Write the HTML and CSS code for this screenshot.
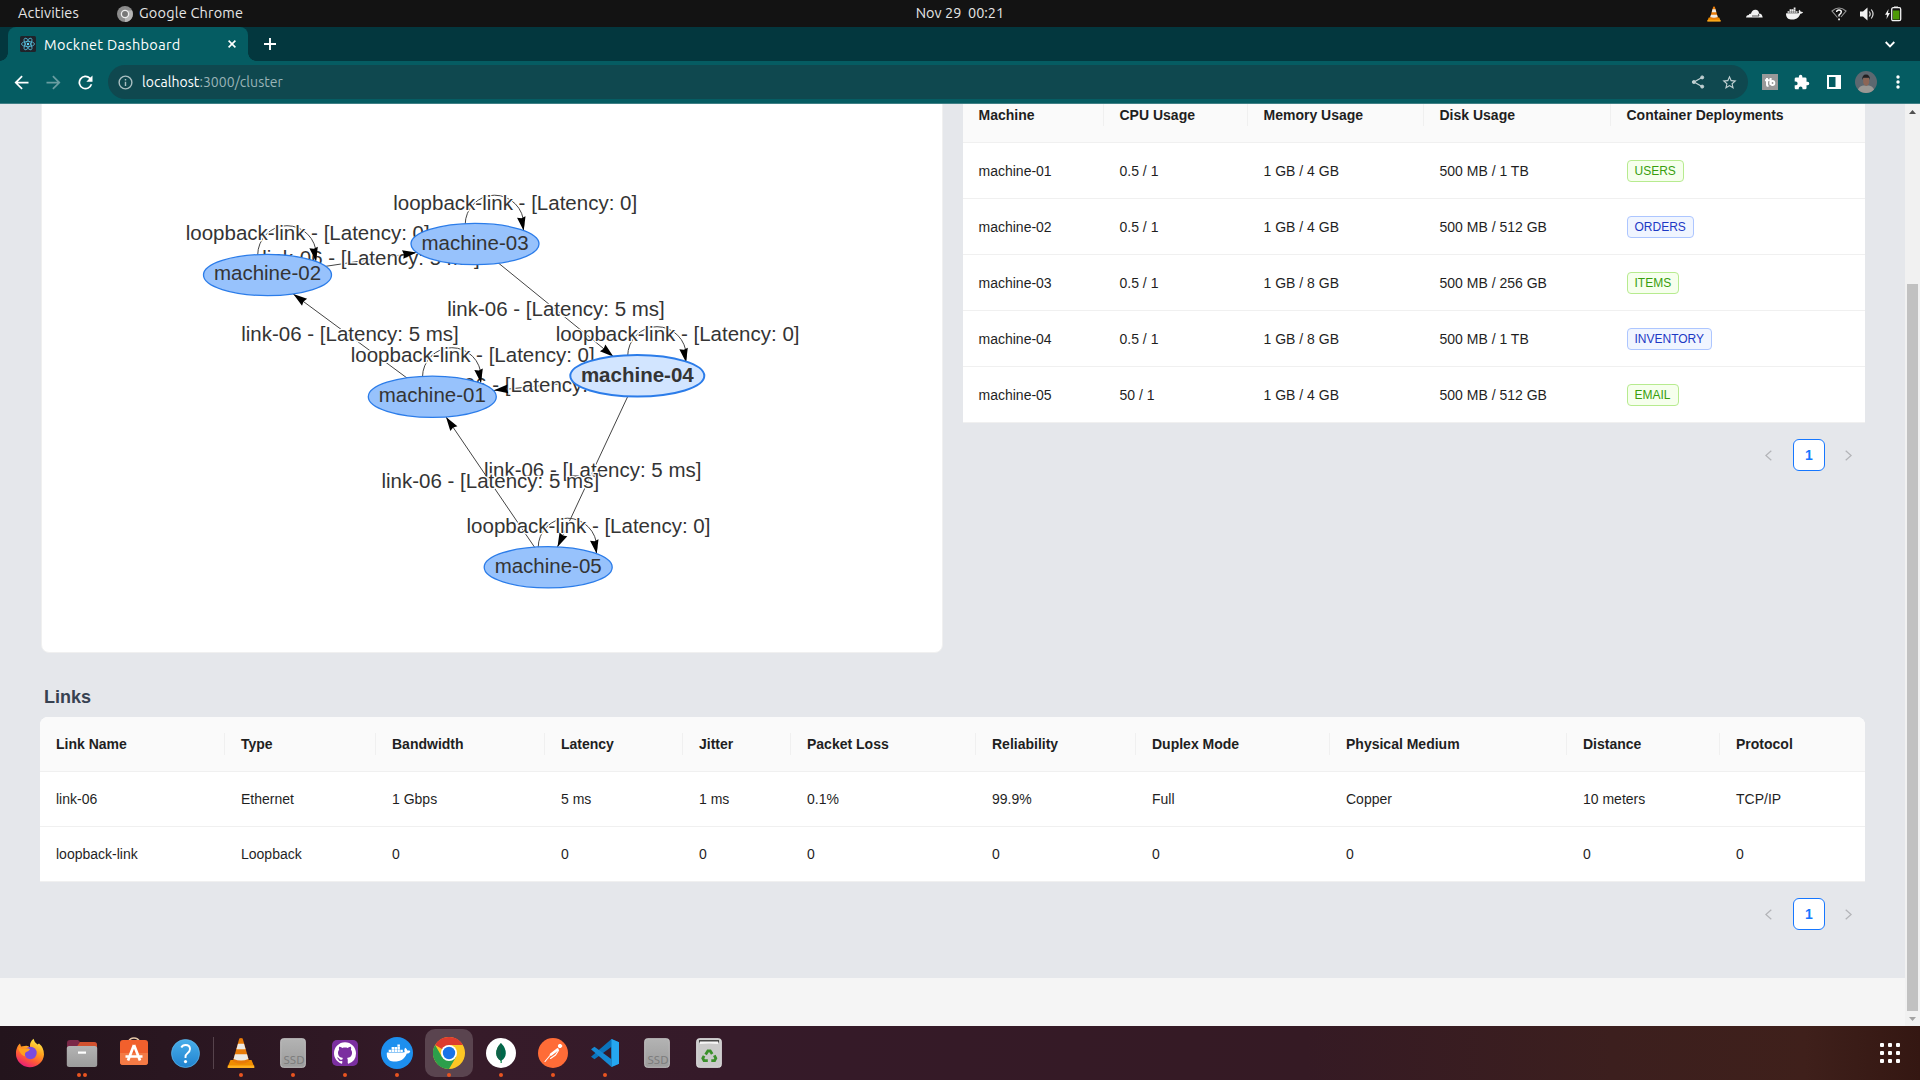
FILE: index.html
```html
<!DOCTYPE html>
<html lang="en">
<head>
<meta charset="utf-8">
<title>Mocknet Dashboard</title>
<link rel="stylesheet" href="styles.css">
</head>
<body>
<svg class="defs" width="0" height="0" aria-hidden="true">
  <defs>
    <symbol id="whale" viewBox="0 0 24 24">
      <path d="M23.76 9.89c-.06-.05-.67-.51-1.95-.51-.34 0-.68.03-1.01.09-.25-1.7-1.65-2.53-1.72-2.57l-.34-.2-.23.33c-.28.44-.49.92-.61 1.43-.23.97-.09 1.88.4 2.66-.59.33-1.55.41-1.74.42H.75a.75.75 0 0 0-.75.75 11.4 11.4 0 0 0 .69 4.06c.55 1.43 1.36 2.48 2.41 3.12 1.18.73 3.1 1.14 5.28 1.14.98 0 1.96-.09 2.93-.27a12.2 12.2 0 0 0 3.82-1.39c.98-.56 1.86-1.28 2.61-2.13 1.25-1.42 2-3 2.55-4.4h.22c1.37 0 2.22-.55 2.68-1.01.31-.29.55-.65.71-1.05z"/>
      <path d="M2.200 8.800h2.500v2.300H2.200zM5.100 8.800h2.500v2.300H5.100zM8 8.800h2.500v2.300H8zM10.900 8.800h2.500v2.300h-2.500zM13.800 8.800h2.500v2.300h-2.500zM5.100 6.100h2.500v2.300H5.100zM8 6.100h2.500v2.300H8zM10.900 6.100h2.500v2.300h-2.500zM10.900 3.400h2.500v2.300h-2.500z"/>
    </symbol>
    <symbol id="cone" viewBox="0 0 28 32">
      <path fill="#f08c00" d="M3.500 23h21L27.600 30.500H.4z"/>
      <path fill="#ffb020" d="M.8 28.500h26.400v2.500H.8z"/>
      <path fill="#e87b08" d="M12.300 1.500q1.700-1 3.400 0l6.500 23q-8.200 4.600-16.400 0z"/>
      <path fill="#eceae6" d="M11 6.700h6l1.600 5.600H9.400zM8 17.300h12l1.400 4.600q-7.400 3-14.800 0z"/>
    </symbol>
    <symbol id="ssd" viewBox="0 0 26 30">
      <rect x=".7" y=".7" width="24.600" height="28.600" rx="2.600" fill="url(#metal)" stroke="#c3c3c3"/>
      <text x="3.500" y="26" class="ssd-text">SSD</text>
    </symbol>
    <linearGradient id="metal" x2="0" y2="1"><stop stop-color="#b3b3b3"/><stop offset="1" stop-color="#9c9c9c"/></linearGradient>
    <linearGradient id="fox" x1=".8" y1="0" x2=".3" y2="1"><stop stop-color="#fff44f"/><stop offset=".4" stop-color="#ffa21e"/><stop offset=".7" stop-color="#ff5a36"/><stop offset="1" stop-color="#e5197c"/></linearGradient>
    <linearGradient id="help" x2="0" y2="1"><stop stop-color="#48aeea"/><stop offset="1" stop-color="#2183cf"/></linearGradient>
    <path id="arrow" d="M0 0L-14 4.300L-12.700 0L-14-4.300z"/>
  </defs>
</svg>

<div class="desktop">
  <header class="topbar">
    <span class="activities">Activities</span>
    <span class="app-name">
      <svg width="16" height="16" viewBox="0 0 16 16"><circle cx="8" cy="8" r="8" fill="#8c8c8c"/><path d="M8 16a8 8 0 0 0 7-11.500H8z" fill="#b5b5b5"/><circle cx="8" cy="8" r="3.600" fill="#777" stroke="#eee" stroke-width="1.300"/></svg>
      <span>Google Chrome</span>
    </span>
    <span class="clock">Nov 29&nbsp; 00:21</span>
    <div class="tray">
      <span class="tray-wide"><svg width="14" height="16"><use href="#cone"/></svg></span>
      <span class="tray-wide"><svg width="17" height="9" viewBox="0 0 17 9" fill="#f2f2f2"><path d="M0 8.500C.2 6.800 1.400 6 2.800 6 3 4.700 4.300 4.400 5 4.800 5.700 1.800 7.700.4 10 .8c2 .3 3 2 3 3.600 2.200.1 3.400 1.500 3.700 4.100z"/><path d="M6 7h7l-.6-2.200" fill="none" stroke="#131313" stroke-width=".7"/></svg></span>
      <span class="tray-wide"><svg width="17" height="17" fill="#f2f2f2"><use href="#whale"/></svg></span>
      <span class="tray-wifi"><svg width="16" height="14" viewBox="0 0 16 14" fill="none" stroke="#bdbdbd"><path d="M6.500 10.500L1 4Q8-2 15 4l-5 6" stroke-width="1.100" opacity=".75"/><path d="M5.600 5Q5.800 3 8 3q2.300 0 2.300 2Q10.300 6.400 8 8v1.500" stroke="#fff" stroke-width="1.400"/><path d="M7.200 11.500h1.700v1.700H7.200z" fill="#fff" stroke="none"/></svg></span>
      <span class="tray-sound"><svg width="15" height="14" viewBox="0 0 15 14"><path d="M0 4.500h3L7.500.5v13L3 9.500H0z" fill="#f2f2f2"/><path d="M9.200 4.500q2 2.500 0 5M11.300 2.500q3.500 4.500 0 9" fill="none" stroke="#ddd" stroke-width="1.200"/></svg></span>
      <span class="tray-battery"><svg width="17" height="16" viewBox="0 0 17 16"><path d="M3.600 3L0 8.800h2L1.500 13 5 7H3z" fill="#f2f2f2"/><path d="M9 .5h4v2H9z" fill="#f2f2f2"/><rect x="6.700" y="1.700" width="9" height="13" rx="1.500" fill="#131313" stroke="#f2f2f2" stroke-width="1.300"/><path d="M8 4.500h6.400v9H8z" fill="#4e9a06"/></svg></span>
    </div>
  </header>

  <div class="tabstrip">
    <div class="tab">
      <svg width="16" height="16" viewBox="0 0 16 16"><rect width="16" height="16" rx="1.500" fill="#20232a"/><g fill="none" stroke="#61dafb" stroke-width=".8" opacity=".85"><ellipse cx="8" cy="8" rx="6.500" ry="2.600"/><ellipse cx="8" cy="8" rx="6.500" ry="2.600" transform="rotate(60 8 8)"/><ellipse cx="8" cy="8" rx="6.500" ry="2.600" transform="rotate(120 8 8)"/></g><circle cx="8" cy="8" r="1.200" fill="#61dafb"/></svg>
      <span class="tab-title">Mocknet Dashboard</span>
      <svg width="8" height="8" viewBox="0 0 8 8" stroke="#fff" stroke-width="1.600"><path d="M.6.6l6.800 6.800M7.400.6L.6 7.400"/></svg>
    </div>
    <svg class="new-tab" width="12" height="12" viewBox="0 0 12 12" stroke="#fff" stroke-width="1.900"><path d="M6 0v12M0 6h12"/></svg>
    <svg class="tab-search" width="10" height="7" viewBox="0 0 10 7" fill="none" stroke="#fff" stroke-width="1.800"><path d="M.7 1L5 5.400 9.300 1"/></svg>
  </div>

  <div class="toolbar">
    <span class="tool"><svg width="21" height="21" viewBox="0 0 24 24" fill="#fff"><path d="M20 11H7.800l5.600-5.600L12 4l-8 8 8 8 1.400-1.400L7.800 13H20z"/></svg></span>
    <span class="tool"><svg width="21" height="21" viewBox="0 0 24 24" fill="#6a9da1"><path d="M12 4l-1.400 1.400 5.600 5.600H4v2h12.200l-5.600 5.600L12 20l8-8z"/></svg></span>
    <span class="tool"><svg width="21" height="21" viewBox="0 0 24 24" fill="#fff"><path d="M17.650 6.350A8 8 0 1 0 19.730 14h-2.080A6 6 0 1 1 16.220 7.780L13 11h7V4z"/></svg></span>
    <div class="omnibox">
      <svg width="17" height="17" viewBox="0 0 24 24" fill="#a9bec1"><path d="M11 7h2v2h-2zm0 4h2v6h-2zm1-9a10 10 0 1 0 0 20 10 10 0 0 0 0-20zm0 18a8 8 0 1 1 0-16 8 8 0 0 1 0 16z"/></svg>
      <span class="url">localhost<span class="url-rest">:3000/cluster</span></span>
      <svg class="share" width="14" height="14" viewBox="0 0 14 14" fill="#c1d0d2" stroke="#c1d0d2"><path d="M11 2.500L3 7l8 4.500" fill="none" stroke-width="1.300"/><circle cx="11.200" cy="2.400" r="1.500"/><circle cx="2.800" cy="7" r="1.500"/><circle cx="11.200" cy="11.600" r="1.500"/></svg>
      <svg class="star" width="17" height="17" viewBox="0 0 24 24" fill="#c1d0d2"><path d="M22 9.240l-7.190-.62L12 2 9.190 8.630 2 9.240l5.460 4.730L5.820 21 12 17.270 18.180 21l-1.630-7.030L22 9.240zM12 15.400l-3.760 2.270 1-4.280-3.320-2.880 4.380-.38L12 6.100l1.710 4.040 4.380.38-3.320 2.880 1 4.280L12 15.400z"/></svg>
    </div>
    <span class="tool"><svg width="16" height="16" viewBox="0 0 16 16"><rect width="16" height="16" fill="#999"/><path d="M5 4v6.500q0 1.500 1.500 1.500M3 6.200h4.500M8.600 4v7" fill="none" stroke="#fff" stroke-width="2"/><circle cx="10.400" cy="9" r="2" fill="none" stroke="#fff" stroke-width="1.800"/></svg></span>
    <span class="tool"><svg width="16" height="16" viewBox="1 0 23 23" fill="#fff"><path d="M20.500 11H19V7a2 2 0 0 0-2-2h-4V3.500a2.500 2.500 0 0 0-5 0V5H4a2 2 0 0 0-2 2v3.800h1.500a2.700 2.700 0 0 1 0 5.400H2V20c0 1.100.9 2 2 2h3.800v-1.500a2.700 2.700 0 0 1 5.400 0V22H17a2 2 0 0 0 2-2v-4h1.500a2.500 2.500 0 0 0 0-5z"/></svg></span>
    <span class="tool"><svg width="14" height="14" viewBox="0 0 14 14"><path fill="#fff" fill-rule="evenodd" d="M0 0h14v14H0zM2 2v10h6.500V2z"/></svg></span>
    <span class="tool"><svg width="22" height="22" viewBox="0 0 22 22"><clipPath id="round"><circle cx="11" cy="11" r="11"/></clipPath><g clip-path="url(#round)"><path fill="#5d6870" d="M0 0h22v22H0z"/><path fill="#9a9894" d="M2 22q1-7 6-7.500h6q5 .5 6 7.500z"/><path fill="#8c6656" d="M8.200 7h6v5q-1 3-3 3t-3-3z"/><path fill="#231f20" d="M7.200 9Q7 3.500 11 3.500T15 9l-1-2.200H8.400z"/></g></svg></span>
    <span class="tool"><svg width="4" height="14" viewBox="0 0 4 14" fill="#fff"><circle cx="2" cy="2" r="1.700"/><circle cx="2" cy="7" r="1.700"/><circle cx="2" cy="12" r="1.700"/></svg></span>
  </div>

  <div class="viewport">
    <main class="page">
      <div class="content">
        <div class="overview">
          <div class="graph-card">
            <svg class="graph" width="900" height="563" viewBox="42 89 900 563">
              <g class="edge"><path d="M432.300 396.700L267.500 275"/><text x="350" y="341">link-06 - [Latency: 5 ms]</text></g>
              <g class="edge"><path d="M267.500 275L475 244"/><text x="371" y="264.700">link-06 - [Latency: 5 ms]</text></g>
              <g class="edge"><path d="M475 244L637.300 376"/><text x="556" y="315.700">link-06 - [Latency: 5 ms]</text></g>
              <g class="edge"><path d="M637.300 376L548 567"/><text x="592.700" y="477">link-06 - [Latency: 5 ms]</text></g>
              <g class="edge"><path d="M548 567L432.300 396.700"/><text x="490.300" y="488">link-06 - [Latency: 5 ms]</text></g>
              <g class="edge"><path d="M637.300 376L432.300 396.700"/><text x="535" y="392">link-06 - [Latency: 5 ms]</text></g>
              <g class="edge"><circle cx="451.800" cy="377" r="29.300"/><text x="472.700" y="362">loopback-link - [Latency: 0]</text></g>
              <g class="edge"><circle cx="287" cy="255" r="29.300"/><text x="307.700" y="240">loopback-link - [Latency: 0]</text></g>
              <g class="edge"><circle cx="494.500" cy="224.500" r="29.300"/><text x="515.200" y="210.300">loopback-link - [Latency: 0]</text></g>
              <g class="edge"><circle cx="657" cy="356" r="29.300"/><text x="677.600" y="341.300">loopback-link - [Latency: 0]</text></g>
              <g class="edge"><circle cx="567.500" cy="547.500" r="29.300"/><text x="588.500" y="533">loopback-link - [Latency: 0]</text></g>
              <g>
                <use href="#arrow" transform="translate(293.300 294) rotate(216.400)"/>
                <use href="#arrow" transform="translate(416.500 252.500) rotate(-8.500)"/>
                <use href="#arrow" transform="translate(613.500 356.700) rotate(39.100)"/>
                <use href="#arrow" transform="translate(557.500 547) rotate(115)"/>
                <use href="#arrow" transform="translate(446 417) rotate(235.800)"/>
                <use href="#arrow" transform="translate(494 390.300) rotate(174.200)"/>
                <use href="#arrow" transform="translate(481 383) rotate(80)"/>
                <use href="#arrow" transform="translate(316 261.200) rotate(80)"/>
                <use href="#arrow" transform="translate(523.700 230.700) rotate(80)"/>
                <use href="#arrow" transform="translate(686 362.300) rotate(80)"/>
                <use href="#arrow" transform="translate(596.700 553.700) rotate(80)"/>
              </g>
              <g class="node"><ellipse cx="432.300" cy="396.800" rx="64" ry="20.600"/><text x="432.300" y="402.300">machine-01</text></g>
              <g class="node"><ellipse cx="267.500" cy="275" rx="64" ry="20.600"/><text x="267.500" y="280">machine-02</text></g>
              <g class="node"><ellipse cx="475" cy="244" rx="64" ry="20.600"/><text x="475" y="250">machine-03</text></g>
              <g class="node"><ellipse cx="548.200" cy="567.300" rx="64" ry="20.600"/><text x="548.200" y="573">machine-05</text></g>
              <g class="node selected"><ellipse cx="637.300" cy="375.800" rx="67" ry="20.800"/><text x="637.300" y="382">machine-04</text></g>
            </svg>
          </div>
          <div>
            <table class="table">
              <colgroup><col class="c141"><col class="c144"><col class="c176"><col class="c187"><col></colgroup>
              <thead><tr><th>Machine</th><th>CPU Usage</th><th>Memory Usage</th><th>Disk Usage</th><th>Container Deployments</th></tr></thead>
              <tbody class="tall">
                <tr><td>machine-01</td><td>0.5 / 1</td><td>1 GB / 4 GB</td><td>500 MB / 1 TB</td><td><span class="tag green">USERS</span></td></tr>
                <tr><td>machine-02</td><td>0.5 / 1</td><td>1 GB / 4 GB</td><td>500 MB / 512 GB</td><td><span class="tag blue">ORDERS</span></td></tr>
                <tr><td>machine-03</td><td>0.5 / 1</td><td>1 GB / 8 GB</td><td>500 MB / 256 GB</td><td><span class="tag green">ITEMS</span></td></tr>
                <tr><td>machine-04</td><td>0.5 / 1</td><td>1 GB / 8 GB</td><td>500 MB / 1 TB</td><td><span class="tag blue">INVENTORY</span></td></tr>
                <tr><td>machine-05</td><td>50 / 1</td><td>1 GB / 4 GB</td><td>500 MB / 512 GB</td><td><span class="tag green">EMAIL</span></td></tr>
              </tbody>
            </table>
            <div class="pagination">
              <span class="page-step"><svg width="8" height="11" viewBox="0 0 8 11"><path d="M6.300.7L.9 5.500l5.400 4.800"/></svg></span>
              <span class="page-current">1</span>
              <span class="page-step"><svg width="8" height="11" viewBox="0 0 8 11"><path d="M.7.7l5.400 4.800-5.400 4.800"/></svg></span>
            </div>
          </div>
        </div>

        <h2 class="section-title">Links</h2>
        <table class="table">
          <colgroup><col class="c185"><col class="c151"><col class="c169"><col class="c138"><col class="c108"><col class="c185"><col class="c160"><col class="c194"><col class="c237"><col class="c153"><col></colgroup>
          <thead><tr><th>Link Name</th><th>Type</th><th>Bandwidth</th><th>Latency</th><th>Jitter</th><th>Packet Loss</th><th>Reliability</th><th>Duplex Mode</th><th>Physical Medium</th><th>Distance</th><th>Protocol</th></tr></thead>
          <tbody>
            <tr><td>link-06</td><td>Ethernet</td><td>1 Gbps</td><td>5 ms</td><td>1 ms</td><td>0.1%</td><td>99.9%</td><td>Full</td><td>Copper</td><td>10 meters</td><td>TCP/IP</td></tr>
            <tr><td>loopback-link</td><td>Loopback</td><td>0</td><td>0</td><td>0</td><td>0</td><td>0</td><td>0</td><td>0</td><td>0</td><td>0</td></tr>
          </tbody>
        </table>
        <div class="pagination">
          <span class="page-step"><svg width="8" height="11" viewBox="0 0 8 11"><path d="M6.300.7L.9 5.500l5.400 4.800"/></svg></span>
          <span class="page-current">1</span>
          <span class="page-step"><svg width="8" height="11" viewBox="0 0 8 11"><path d="M.7.7l5.400 4.800-5.400 4.800"/></svg></span>
        </div>
      </div>
    </main>
    <div class="scrollbar">
      <svg width="7" height="4" viewBox="0 0 7 4" fill="#505050"><path d="M0 4L3.500 0 7 4z"/></svg>
      <div class="thumb"></div>
      <svg width="7" height="4" viewBox="0 0 7 4" fill="#a3a3a3"><path d="M0 0l3.500 4L7 0z"/></svg>
    </div>
  </div>

  <footer class="dock">
    <span class="app"><svg width="30" height="30" viewBox="0 0 30 30"><path fill="url(#fox)" d="M1 15C1 11 3 7 5 5.500l1 3L9.500 8Q13 7 15 9.500 14.500 4 18.500.8 19 4 22.500 6.500L24 5.500q5 4 5 11A14 13.500 0 0 1 1 15z"/><circle cx="15.500" cy="15" r="6.200" fill="#7a4be0"/><path fill="#ffa01e" d="M3 9.500l6 1.500q4-1.500 6 .5-2 2-4 2.500-2 2-.5 4.500Q5 17 3 9.500z"/></svg></span>
    <span class="app run run-two"><svg width="32" height="28" viewBox="0 0 32 28"><path d="M1 4q0-3 3-3h8l2 2h14q3 0 3 3v6H1z" fill="#7b2848"/><path d="M14 3h14q3 0 3 3v3H10z" fill="#d2522f"/><rect x=".8" y="7" width="30.400" height="21" rx="2.500" fill="url(#metal)"/><path d="M12 12.500h8v2.200h-8z" fill="#fff"/></svg></span>
    <span class="app"><svg class="lift" width="30" height="30" viewBox="0 0 30 30"><path d="M9.500 8V5.500Q11 2 15 2t5.500 3.500V8" fill="none" stroke="#e7c9a9" stroke-width="1.500"/><rect x="1" y="4" width="28" height="25" rx="3" fill="#f1602d"/><path d="M1 17h28v9q0 3-3 3H4q-3 0-3-3z" fill="#f47a45"/><path d="M15 9L9 24.500M15 9l6 15.500M6.500 20.500h17" fill="none" stroke="#fff" stroke-width="2.700"/></svg></span>
    <span class="app"><svg width="30" height="29" viewBox="0 0 30 29"><circle cx="14.500" cy="14.500" r="14" fill="url(#help)" stroke="#5db9ef" stroke-width=".7"/><path d="M10.300 8.500Q11.500 6 14.500 6q4.500 0 4.500 4 0 2.300-2.500 4.200-2 1.500-2 3.800v1" fill="none" stroke="#fff" stroke-width="1.900"/><circle cx="14.500" cy="22.600" r="1.600" fill="#fff"/></svg></span>
    <span class="divider"></span>
    <span class="app run"><svg width="28" height="32"><use href="#cone"/></svg></span>
    <span class="app run"><svg width="26" height="30"><use href="#ssd"/></svg></span>
    <span class="app run"><svg width="26" height="26" viewBox="0 0 26 26"><rect width="26" height="26" rx="5" fill="#7b2fa0"/><path transform="translate(2 2.200) scale(1.375)" fill="#fff" d="M8 0C3.580 0 0 3.580 0 8c0 3.540 2.290 6.530 5.470 7.590.4.070.55-.17.55-.38 0-.19-.01-.82-.01-1.490-2.010.37-2.530-.49-2.690-.94-.09-.23-.48-.94-.82-1.130-.28-.15-.68-.52-.01-.53.63-.01 1.080.58 1.230.82.72 1.210 1.870.87 2.330.66.070-.52.28-.87.51-1.070-1.780-.2-3.640-.89-3.640-3.950 0-.87.31-1.590.82-2.150-.08-.2-.36-1.020.08-2.120 0 0 .67-.21 2.200.82.64-.18 1.320-.27 2-.27.68 0 1.360.09 2 .27 1.530-1.040 2.200-.82 2.200-.82.44 1.100.16 1.920.08 2.120.51.56.82 1.270.82 2.150 0 3.070-1.870 3.750-3.650 3.950.29.25.54.73.54 1.480 0 1.070-.01 1.930-.01 2.200 0 .21.15.46.55.38A8.010 8.010 0 0 0 16 8c0-4.420-3.580-8-8-8z"/></svg></span>
    <span class="app run"><svg width="32" height="32" viewBox="0 0 32 32"><circle cx="16" cy="16" r="16" fill="#1d8fee"/><use href="#whale" x="5.500" y="4" width="24" height="24" fill="#fff"/></svg></span>
    <span class="app run active"><svg width="32" height="32" viewBox="0 0 32 32"><circle cx="16" cy="16" r="16" fill="#fcc624"/><path d="M16 16L2.140 8A16 16 0 0 1 29.860 8H16z" fill="#dd3b2f"/><path d="M2.140 8A16 16 0 0 0 16 32l7-12-7-4-7 4z" fill="#2c9f4b"/><circle cx="16" cy="16" r="8" fill="#fff"/><circle cx="16" cy="16" r="6.200" fill="#1a73e8"/></svg></span>
    <span class="app run"><svg width="30" height="30" viewBox="0 0 30 30"><circle cx="15" cy="15" r="15" fill="#fff"/><path d="M15 5q-5 5-4.800 10.500Q10.500 20 14.500 22.500V25h1z" fill="#13aa52"/><path d="M15 5q5 5 4.800 10.500-.3 4.500-4.300 7V25H15z" fill="#00684a"/><path d="M15 5q-5 5-4.800 10.500Q10.500 20 15 23z" fill="#116149"/></svg></span>
    <span class="app run"><svg width="30" height="30" viewBox="0 0 30 30"><circle cx="15" cy="15" r="15" fill="#ff6c37"/><g fill="#fff" stroke="#fff" stroke-linecap="round"><circle cx="22" cy="8" r="1.700"/><path d="M19.500 11.500L13 16.500" stroke-width="2.600"/><path d="M12 17.500l-5 6M20.500 12.500l-3 4.500-5 3.500" fill="none" stroke-width="1.100"/></g></svg></span>
    <span class="app run"><svg width="28" height="28" viewBox="0 0 28 28"><path d="M20.500 0L28 3.200V24.800L20.500 28l-.3-20L3.500 20.200 0 17.800z" fill="#0b74bd"/><path d="M3.500 7.800L0 10.200 20.500 28 20.200 20z" fill="#1689d3"/><path d="M20.500 0L28 3.200V24.800L20.500 28z" fill="#25a7f0"/></svg></span>
    <span class="app"><svg width="26" height="30"><use href="#ssd"/></svg></span>
    <span class="app"><svg width="26" height="30" viewBox="0 0 26 30"><rect x=".7" y=".7" width="24.600" height="28.600" rx="2.600" fill="#cacaca" stroke="#e2e2e2"/><path d="M3 2h20v2.500H3z" fill="#4a4a4a"/><path d="M4 3.500h18V6q-9-1-18 0z" fill="#f5f5f5"/><g fill="none" stroke="#3a8f2a" stroke-width="2.800"><path d="M9.600 16.500l2.300-3.600h2.300l2 3.200"/><path d="M18.300 17.300l1.500 3-1.200 2.300h-3.300"/><path d="M11.800 22.600H8l-1.200-2.300 1.300-2.500"/></g></svg></span>
    <span class="apps-grid"><svg width="20" height="20" viewBox="0 0 20 20" fill="#fff"><rect width="4" height="4" rx="1"/><rect x="8" width="4" height="4" rx="1"/><rect x="16" width="4" height="4" rx="1"/><rect y="8" width="4" height="4" rx="1"/><rect x="8" y="8" width="4" height="4" rx="1"/><rect x="16" y="8" width="4" height="4" rx="1"/><rect y="16" width="4" height="4" rx="1"/><rect x="8" y="16" width="4" height="4" rx="1"/><rect x="16" y="16" width="4" height="4" rx="1"/></svg></span>
  </footer>
</div>
</body>
</html>
```
FILE: styles.css
```css
* { box-sizing: border-box; }
body { margin: 0; overflow: hidden; font-family: "Liberation Sans", Arial, sans-serif; }
svg { display: block; flex: none; }
.defs { position: absolute; }

.desktop { width: 1920px; height: 1080px; display: flex; flex-direction: column; }

.topbar, .tabstrip, .toolbar { font-family: Ubuntu, "Noto Sans", sans-serif; white-space: nowrap; flex: none; }

/* System bar */
.topbar {
  height: 27px; background: #131313; color: #e6e6e6; font-size: 14.500px; line-height: 20px;
  display: grid; grid-template-columns: 1fr auto 1fr; grid-template-areas: "left clock tray"; align-items: center;
}
.activities { grid-area: left; padding: 0 0 1px 18px; letter-spacing: 0.15px; }
.app-name { grid-area: left; padding-left: 117px; display: flex; align-items: center; gap: 6px; letter-spacing: 0.2px; }
.app-name span, .clock { padding-bottom: 1px; }
.clock { grid-area: clock; }
.tray { grid-area: tray; display: flex; align-items: center; justify-content: flex-end; padding-right: 14px; }
.tray span { display: flex; justify-content: center; }
.tray-wide { width: 40px; }
.tray-wifi { width: 30px; margin-left: 10px; }
.tray-sound { width: 26px; }
.tray-battery { width: 26px; }

/* Browser tabs */
.tabstrip { height: 34px; background: #03373e; display: flex; align-items: center; padding: 0 25px 0 8px; color: #fff; }
.tab {
  width: 240px; height: 34px; padding: 0 12px; display: flex; align-items: center; position: relative;
  background: #055c62; border-radius: 8px 8px 0 0; font-size: 14.500px; letter-spacing: 0.32px;
}
.tab::before, .tab::after { content: ""; position: absolute; bottom: 0; width: 8px; height: 8px; }
.tab::before { left: -8px; background: radial-gradient(circle at 0 0, #03373e 7.500px, #055c62 8px); }
.tab::after { right: -8px; background: radial-gradient(circle at 100% 0, #03373e 7.500px, #055c62 8px); }
.tab-title { margin-left: 8px; flex: 1; }
.new-tab { margin-left: 16px; }
.tab-search { margin-left: auto; }

/* Browser toolbar */
.toolbar { height: 43px; background: #055c62; border-bottom: 1px solid #3f7f85; display: flex; align-items: center; padding: 0 6px 0 5px; }
.tool { width: 32px; display: flex; justify-content: center; }
.omnibox {
  flex: 1; height: 34px; margin: 0 6px 0 7px; padding: 0 10px 0 9px; border-radius: 17px; background: #0f484f;
  display: flex; align-items: center; font-size: 14px; color: #fff;
}
.url { margin-left: 8px; flex: 1; letter-spacing: 0.05px; }
.url-rest { color: #9ab4b7; }
.star { margin-left: 16px; }

/* Web page */
.viewport { flex: 1; min-height: 0; display: flex; overflow: hidden; }
.page { flex: 1; background: #f5f5f5; min-width: 0; }
.content { height: 874px; padding: 0 40px; background: #e5e7eb; overflow: hidden; }
.overview { display: grid; grid-template-columns: 902px 902.500px; column-gap: 20px; margin: -16px 0 0 0.500px; align-items: start; }
.graph-card { height: 565px; background: #fff; border: 1px solid #f0f0f0; border-radius: 8px; }
.edge path, .edge circle { fill: none; stroke: #444; stroke-width: 1; }
.graph text { font-size: 20.500px; text-anchor: middle; fill: #343434; }
.edge text { stroke: #fff; stroke-width: 2.500px; paint-order: stroke; }
.node ellipse { fill: #97c2fc; stroke: #2b7ce9; stroke-width: 1.300; }
.selected ellipse { fill: #d2e5ff; stroke-width: 2; }
.selected text { font-weight: bold; }

.table {
  width: 100%; table-layout: fixed; border-collapse: separate; border-spacing: 0;
  background: #fff; border-radius: 8px 8px 0 0; font-size: 14px; line-height: 22px; color: #1f1f1f;
}
.table th, .table td { height: 55px; padding: 0 16px; text-align: left; border-bottom: 1px solid #f0f0f0; }
.table .tall td { height: 56px; }
.table th { background: #fafafa; position: relative; white-space: nowrap; }
.table th:first-child { border-top-left-radius: 8px; }
.table th:last-child { border-top-right-radius: 8px; }
.table th:not(:last-child)::after {
  content: ""; position: absolute; right: 0; top: 16px; width: 1px; height: 22px; background: #f0f0f0;
}
.c108 { width: 108px; } .c138 { width: 138px; } .c141 { width: 141px; } .c144 { width: 144px; }
.c151 { width: 151px; } .c153 { width: 153px; } .c160 { width: 160px; } .c169 { width: 169px; }
.c176 { width: 176px; } .c185 { width: 185px; } .c187 { width: 187px; } .c194 { width: 194px; }
.c237 { width: 237px; }

.tag { display: block; width: max-content; padding: 0 7px; font-size: 12px; line-height: 20px; border: 1px solid; border-radius: 4px; }
.green { color: #389e0d; background: #f6ffed; border-color: #b7eb8f; }
.blue { color: #1d39c4; background: #f0f5ff; border-color: #adc6ff; }

.pagination { display: flex; justify-content: flex-end; gap: 8px; margin-top: 16px; font-size: 14px; }
.page-step, .page-current { width: 32px; height: 32px; display: flex; align-items: center; justify-content: center; }
.page-step path { fill: none; stroke: #b3b4b8; stroke-width: 1.200; }
.page-current { background: #fff; border: 1px solid #1677ff; border-radius: 6px; color: #1677ff; font-weight: bold; }
.section-title { margin: 31px 0 6px 4px; font-size: 18px; line-height: 27px; color: #374151; }

.scrollbar { width: 15px; background: #f1f1f1; display: flex; flex-direction: column; align-items: center; padding: 6px 0 5px; }
.thumb { width: 11px; height: 727px; margin: auto 0 6px; background: #c1c1c1; }

/* Dock */
.dock {
  flex: none; height: 54px; display: flex; align-items: center; padding-left: 4px;
  background: linear-gradient(90deg, #23141c, #2f1824 17%, #361b29 24%, #351a29 38%, #351a24 68%, #3c1f1e 84%, #3f201b 94%, #341712);
}
.app { width: 52px; height: 54px; display: flex; align-items: center; justify-content: center; position: relative; }
.app svg { position: relative; }
.app .lift { margin-top: -4px; }
.run::after { content: ""; position: absolute; left: 24px; bottom: 3px; width: 4px; height: 4px; border-radius: 2px; background: #e95420; }
.run-two::after { left: 21px; box-shadow: 6px 0 #e95420; }
.active::before { content: ""; position: absolute; left: 2px; top: 3px; width: 48px; height: 48px; border-radius: 10px; background: #5a444f; }
.divider { width: 1px; height: 32px; margin: 0 1px; background: #56434c; }
.ssd-text { font: 11.500px "Noto Sans", sans-serif; fill: #7d7d7d; }
.apps-grid { margin: 0 20px 0 auto; }
```
